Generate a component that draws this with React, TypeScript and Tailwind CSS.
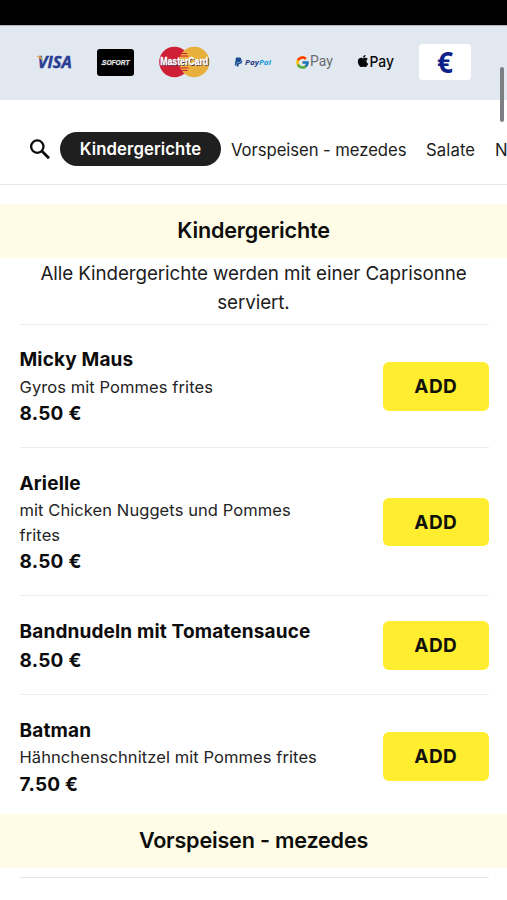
import { FcGoogle } from "react-icons/fc";
import { FaApple, FaPaypal } from "react-icons/fa";

type Dish = { name: string; description?: string; price: string };

const dishes: Dish[] = [
  { name: "Micky Maus", description: "Gyros mit Pommes frites", price: "8.50 €" },
  { name: "Arielle", description: "mit Chicken Nuggets und Pommes frites", price: "8.50 €" },
  { name: "Bandnudeln mit Tomatensauce", price: "8.50 €" },
  { name: "Batman", description: "Hähnchenschnitzel mit Pommes frites", price: "7.50 €" },
];

function Visa() {
  return (
    <svg className="ml-[36px] h-[26px] w-[38px] shrink-0 overflow-visible" viewBox="0 0 38 26">
      <text x="1.8" y="18.5" textLength="34" lengthAdjust="spacingAndGlyphs" fontFamily="Open Sans, sans-serif" fontSize="15.5" fontWeight="700" fontStyle="italic" fill="#273c92" stroke="#273c92" strokeWidth="0.4">VISA</text>
      <path d="M0.5 7.3H4.2Q5.4 7.3 5.7 8.6L6.4 12Q4.7 8.8 0.5 7.6Z" fill="#e9a547" />
    </svg>
  );
}

function Sofort() {
  return (
    <div className="ml-[23px] flex h-[27px] w-[37px] shrink-0 items-center justify-center rounded-[3px] bg-black">
      <svg className="h-[16px] w-[32px] overflow-visible" viewBox="0 0 32 16">
        <text x="2" y="10.8" textLength="27.5" lengthAdjust="spacingAndGlyphs" fontFamily="Liberation Sans, sans-serif" fontSize="7.5" fontWeight="700" fontStyle="italic" fill="#e8e8e8" stroke="#e8e8e8" strokeWidth="0.25">SOFORT</text>
        <path d="M1.3 10.5H5" stroke="#e8e8e8" strokeWidth="0.9" />
      </svg>
    </div>
  );
}

function MasterCard() {
  return (
    <svg className="ml-[24px] h-[32px] w-[53px] shrink-0 overflow-visible" viewBox="0 0 53 32">
      <circle cx="16.4" cy="16" r="15.2" fill="#cf1f36" />
      <circle cx="36.2" cy="16" r="15.2" fill="#e8af3d" />
      <path d="M23 7.5h6M22 10h8M21.5 22h9M22.5 24.5h7" stroke="#cf1f36" strokeWidth="1.2" />
      <text x="3" y="20.1" textLength="48" lengthAdjust="spacingAndGlyphs" fontFamily="Liberation Sans, sans-serif" fontSize="10.8" fontWeight="700" fill="#423052">MasterCard</text>
      <text x="2.2" y="19.4" textLength="48" lengthAdjust="spacingAndGlyphs" fontFamily="Liberation Sans, sans-serif" fontSize="10.8" fontWeight="700" fill="#fff" stroke="#fff" strokeWidth="0.3">MasterCard</text>
    </svg>
  );
}

function PayPal() {
  return (
    <div className="ml-[23px] flex h-[14px] w-[39px] shrink-0 items-center">
      <FaPaypal className="h-[10px] w-[9px] shrink-0 text-[#164a91]" />
      <svg className="ml-[1px] h-[14px] w-[28px] shrink-0 overflow-visible" viewBox="0 0 28 14">
        <text x="1" y="10" textLength="26" lengthAdjust="spacingAndGlyphs" fontFamily="Open Sans, sans-serif" fontSize="7.5" fontWeight="700" fontStyle="italic" fill="#253b80">
          Pay<tspan fill="#219bd7">Pal</tspan>
        </text>
      </svg>
    </div>
  );
}

function GooglePay() {
  return (
    <div className="ml-[22px] flex h-[24px] w-[39px] shrink-0 items-center">
      <FcGoogle className="h-[15px] w-[15px] shrink-0" />
      <svg className="h-[24px] w-[24px] shrink-0 overflow-visible" viewBox="0 0 24 24">
        <text x="0" y="16.4" textLength="22.8" lengthAdjust="spacingAndGlyphs" fontFamily="Roboto, sans-serif" fontSize="15.5" fill="#696c71">Pay</text>
      </svg>
    </div>
  );
}

function ApplePay() {
  return (
    <div className="ml-[23px] flex h-[24px] w-[39px] shrink-0 items-center">
      <FaApple className="-mt-[2px] h-[14px] w-[12px] shrink-0 text-[#07090b]" />
      <svg className="h-[24px] w-[26px] shrink-0 overflow-visible" viewBox="0 0 26 24">
        <text x="0.5" y="17" textLength="24.5" lengthAdjust="spacingAndGlyphs" fontFamily="Inter, sans-serif" fontSize="14.8" fontWeight="500" fill="#07090b">Pay</text>
      </svg>
    </div>
  );
}

function Euro() {
  return (
    <div className="ml-[23px] flex h-[36px] w-[52px] shrink-0 items-center justify-center rounded-[4px] bg-white">
      <svg className="h-[36px] w-[20px] overflow-visible" viewBox="0 0 20 36">
        <text x="2" y="28.5" textLength="16" lengthAdjust="spacingAndGlyphs" fontFamily="Open Sans, sans-serif" fontSize="28.5" fontWeight="700" fill="#0d2288">€</text>
      </svg>
    </div>
  );
}

function SectionTitle({ children }: { children: string }) {
  return (
    <h2 className="flex h-[53.5px] items-center justify-center bg-[#fefce6] pb-px text-[21.6px] font-semibold tracking-[-0.2px] text-[#0d0d0b]">
      {children}
    </h2>
  );
}

function DishRow({ dish }: { dish: Dish }) {
  return (
    <li className="flex items-center justify-between border-t border-[#ececec] pt-[21px] pb-[18.4px] last:pb-[15.4px]">
      <div className="w-[300px]">
        <h3 className="pt-[0.8px] text-[19px] leading-[28.2px] font-bold tracking-[0.15px] whitespace-nowrap text-[#0c0c0c]">{dish.name}</h3>
        {dish.description && <p className="text-[16.5px] leading-[24.6px] tracking-[0.08px] text-[#242424]">{dish.description}</p>}
        <p className="pt-[0.2px] text-[19px] leading-[29.2px] font-bold tracking-[0.25px] text-[#0c0c0c]">{dish.price}</p>
      </div>
      <button className="mb-[1.6px] h-[48.5px] w-[105.5px] rounded-[6px] bg-[#ffed2f] pt-[2px] text-[19px] font-bold tracking-[0.4px] text-[#11110c]">ADD</button>
    </li>
  );
}

export default function App() {
  return (
    <div className="relative h-[900px] w-[507px] overflow-hidden bg-white font-['Inter',sans-serif] text-[#1c1c1c]">
      <div className="h-[25px] bg-black" />
      <div className="flex h-[75px] items-center border-t border-[#b4b8bd] bg-[#e2e8f0] pb-[2px]">
        <Visa />
        <Sofort />
        <MasterCard />
        <PayPal />
        <GooglePay />
        <ApplePay />
        <Euro />
      </div>

      <nav className="flex h-[85px] items-center overflow-hidden border-b border-[#e8e8e8] pt-[14px] text-[16.7px] whitespace-nowrap">
        <svg className="ml-[29px] h-[22px] w-[22px] shrink-0" viewBox="0 0 22 22" fill="none" stroke="#0b0b0b" strokeWidth="2.3">
          <circle cx="8.3" cy="8.6" r="6.2" />
          <path d="M12.8 13.1L20 20.3" strokeWidth="2.8" />
        </svg>
        <a className="ml-[9px] flex h-[34px] w-[161px] shrink-0 items-center justify-center rounded-full bg-[#1f1f1f] pt-[2px] font-semibold tracking-[0.1px] text-white">Kindergerichte</a>
        <a className="ml-[10px] w-[175px] shrink-0 pt-[3px] tracking-[-0.07px]">Vorspeisen - mezedes</a>
        <a className="ml-[20px] w-[49px] shrink-0 pt-[3px] tracking-[0.1px]">Salate</a>
        <a className="ml-[20px] shrink-0 pt-[3px]">N</a>
      </nav>

      <main className="pt-[19px]">
        <SectionTitle>Kindergerichte</SectionTitle>
        <p className="px-[20px] pt-[1.5px] pb-[6px] text-center text-[18.8px] leading-[29.3px] tracking-[-0.09px]">
          Alle Kindergerichte werden mit einer Caprisonne serviert.
        </p>
        <ul className="mr-[18.5px] ml-[19.5px]">
          {dishes.map((dish) => (
            <DishRow key={dish.name} dish={dish} />
          ))}
        </ul>
        <SectionTitle>Vorspeisen - mezedes</SectionTitle>
        <div className="mt-[9px] mr-[18.5px] ml-[19.5px] border-t border-[#e6e6e6]" />
      </main>

      <div className="absolute top-[67px] right-[3px] h-[55px] w-[4px] rounded-full bg-[#7e7f82]" />
    </div>
  );
}
